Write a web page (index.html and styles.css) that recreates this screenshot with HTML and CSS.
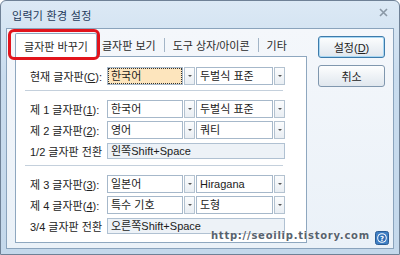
FILE: index.html
```html
<!DOCTYPE html>
<html lang="ko">
<head>
  <meta charset="UTF-8" />
  <title>입력기 환경 설정</title>
  <link rel="stylesheet" href="styles.css">
</head>
<body>
  <div class="window">
    <div class="titlebar">
      <span class="title">입력기 환경 설정</span>
      <svg class="close" width="9" height="9" viewBox="0 0 9 9">
        <path d="M1 1 L8 8 M8 1 L1 8" stroke="#8a98a6" stroke-width="1.6" fill="none" />
      </svg>
    </div>

    <div class="client">
      <div class="main">
        <div class="tabs">
          <div class="tab active">글자판 바꾸기<span class="mark"></span></div>
          <div class="tab">글자판 보기</div>
          <span class="bar"></span>
          <div class="tab">도구 상자/아이콘</div>
          <span class="bar"></span>
          <div class="tab">기타</div>
        </div>

        <div class="panel">
          <div class="row">
            <span class="label">현재 글자판(<u>C</u>):</span>
            <div class="combo"><span class="box focus">한국어</span><span class="arrow"></span></div>
            <div class="combo wide"><span class="box">두벌식 표준</span><span class="arrow"></span></div>
          </div>

          <div class="sep"></div>

          <div class="group">
            <div class="row">
              <span class="label">제 1 글자판(<u>1</u>):</span>
              <div class="combo"><span class="box">한국어</span><span class="arrow"></span></div>
              <div class="combo wide"><span class="box">두벌식 표준</span><span class="arrow"></span></div>
            </div>
            <div class="row">
              <span class="label">제 2 글자판(<u>2</u>):</span>
              <div class="combo"><span class="box">영어</span><span class="arrow"></span></div>
              <div class="combo wide"><span class="box">쿼티</span><span class="arrow"></span></div>
            </div>
            <div class="row">
              <span class="label">1/2 글자판 전환</span>
              <span class="field">왼쪽Shift+Space</span>
            </div>
          </div>

          <div class="sep"></div>

          <div class="group">
            <div class="row">
              <span class="label">제 3 글자판(<u>3</u>):</span>
              <div class="combo"><span class="box">일본어</span><span class="arrow"></span></div>
              <div class="combo wide"><span class="box">Hiragana</span><span class="arrow"></span></div>
            </div>
            <div class="row">
              <span class="label">제 4 글자판(<u>4</u>):</span>
              <div class="combo"><span class="box">특수 기호</span><span class="arrow"></span></div>
              <div class="combo wide"><span class="box">도형</span><span class="arrow"></span></div>
            </div>
            <div class="row">
              <span class="label">3/4 글자판 전환</span>
              <span class="field">오른쪽Shift+Space</span>
            </div>
          </div>
        </div>
      </div>

      <div class="side">
        <button class="btn default">설정(<u>D</u>)</button>
        <button class="btn">취소</button>
      </div>
    </div>

    <div class="watermark">http://seoilip.tistory.com</div>
    <svg class="help" width="14" height="14" viewBox="0 0 14 14">
      <rect x="0.5" y="0.5" width="13" height="13" rx="2" fill="#3f7fc4" stroke="#2a5c94" />
      <circle cx="7" cy="7" r="4.8" fill="#fff" />
      <circle cx="7" cy="7" r="3.8" fill="#2f6fb8" />
      <text x="7" y="9.7" text-anchor="middle" font-family="DejaVu Sans" font-size="7" font-weight="bold" fill="#fff">?</text>
    </svg>
  </div>
</body>
</html>
```

FILE: styles.css
```css
body {
  margin: 0;
  width: 400px;
  height: 255px;
  overflow: hidden;
  background: #fff;
  font-family: 'Liberation Sans', 'Noto Sans CJK KR', sans-serif;
  font-size: 11px;
  color: #1b1b1b;
}

u {
  text-decoration: underline;
  text-underline-offset: 1px;
}

.window {
  position: relative;
  width: 400px;
  height: 255px;
  box-sizing: border-box;
  border: 1px solid #6f8196;
  border-radius: 6px 6px 0 0;
  background: linear-gradient(to bottom, #dce9f5, #c9dcee 30%, #c4d8eb);
  display: flex;
  flex-direction: column;
}

.titlebar {
  height: 27px;
  display: flex;
  align-items: center;
  justify-content: space-between;
  padding: 0 11px 0 11px;
}

.title {
  color: #1f3a5a;
  font-size: 11px;
  letter-spacing: 0.3px;
}

.close {
  margin-top: -4px;
}

.client {
  height: 221px;
  box-sizing: border-box;
  margin: 0 5px 5px;
  border: 1px solid #8aa3bc;
  background: linear-gradient(to bottom, #f4f7fb, #eaf1f8);
  display: flex;
  padding: 4px 0 0 8px;
}

.main {
  width: 292px;
}

.tabs {
  height: 23px;
  display: flex;
  align-items: center;
}

.tab {
  padding: 0 6px;
  color: #2a2a2a;
  white-space: nowrap;
}

.tab.active {
  position: relative;
  z-index: 2;
  width: 82px;
  height: 24px;
  box-sizing: border-box;
  align-self: flex-start;
  margin-right: -1px;
  padding: 4px 0 0;
  text-align: center;
  background: #fff;
  border: 1px solid #8ea7bf;
  border-bottom: none;
  border-radius: 2px 2px 0 0;
}

.mark {
  position: absolute;
  top: -5px;
  left: -8px;
  right: -4px;
  bottom: -3px;
  border: 3px solid #e2141c;
  border-radius: 6px;
}

.bar {
  width: 1px;
  height: 14px;
  background: #a3b5c7;
  margin: 0 2px;
}

.panel {
  position: relative;
  z-index: 1;
  height: 187px;
  box-sizing: border-box;
  border: 1px solid #8ea7bf;
  background: #fff;
  padding: 10px 0 0 9px;
}

.group {
  display: flex;
  flex-direction: column;
  gap: 3px;
}

.row {
  height: 18px;
  display: flex;
  align-items: center;
  padding-left: 5px;
}

.label {
  width: 77px;
  white-space: nowrap;
  color: #222;
}

.combo {
  display: flex;
  gap: 1px;
}

.combo.wide {
  margin-left: 1px;
}

.box {
  width: 76px;
  height: 18px;
  box-sizing: border-box;
  border: 1px solid #a6b8ca;
  background: #fff;
  padding-left: 3px;
  line-height: 16px;
  white-space: nowrap;
  overflow: hidden;
}

.wide .box {
  width: 77px;
}

.box.focus {
  background: #fde5bd;
  outline: 1px dotted #333;
  outline-offset: -2px;
}

.arrow {
  position: relative;
  width: 11px;
  height: 18px;
  box-sizing: border-box;
  border: 1px solid #b3c2d0;
  background: linear-gradient(to bottom, #fbfcfd, #e9eef3);
}

.arrow::after {
  content: '';
  position: absolute;
  left: 3px;
  top: 7px;
  border-left: 2px solid transparent;
  border-right: 2px solid transparent;
  border-top: 2px solid #555;
}

.field {
  width: 178px;
  height: 16px;
  box-sizing: border-box;
  border: 1px solid #b0c1d2;
  background: #edf2f7;
  padding-left: 3px;
  line-height: 14px;
  white-space: nowrap;
}

.sep {
  height: 0;
  border-top: 1px solid #c4d0dc;
  border-bottom: 1px solid #fff;
  margin: 5px 23px 8px 0;
}

.side {
  flex: 1;
  display: flex;
  flex-direction: column;
  gap: 7px;
  padding: 3px 0 0 11px;
}

.btn {
  width: 67px;
  height: 22px;
  border: 1px solid #8097ae;
  border-radius: 3px;
  background: linear-gradient(to bottom, #fdfefe, #eef2f6 50%, #e0e7ee);
  font-family: inherit;
  font-size: 11px;
  color: #222;
  padding: 0;
}

.btn.default {
  border-color: #3d7bab;
  box-shadow: inset 0 0 0 1px #a9d7f3;
}

.watermark {
  position: absolute;
  z-index: 3;
  left: 210px;
  top: 229px;
  font-family: 'DejaVu Sans', sans-serif;
  font-size: 10px;
  font-weight: bold;
  color: #57626e;
  text-shadow: 0 0 2px #fff, 0 0 1px #fff;
  letter-spacing: 0.75px;
}

.help {
  position: absolute;
  z-index: 3;
  left: 374px;
  top: 230px;
}
```
